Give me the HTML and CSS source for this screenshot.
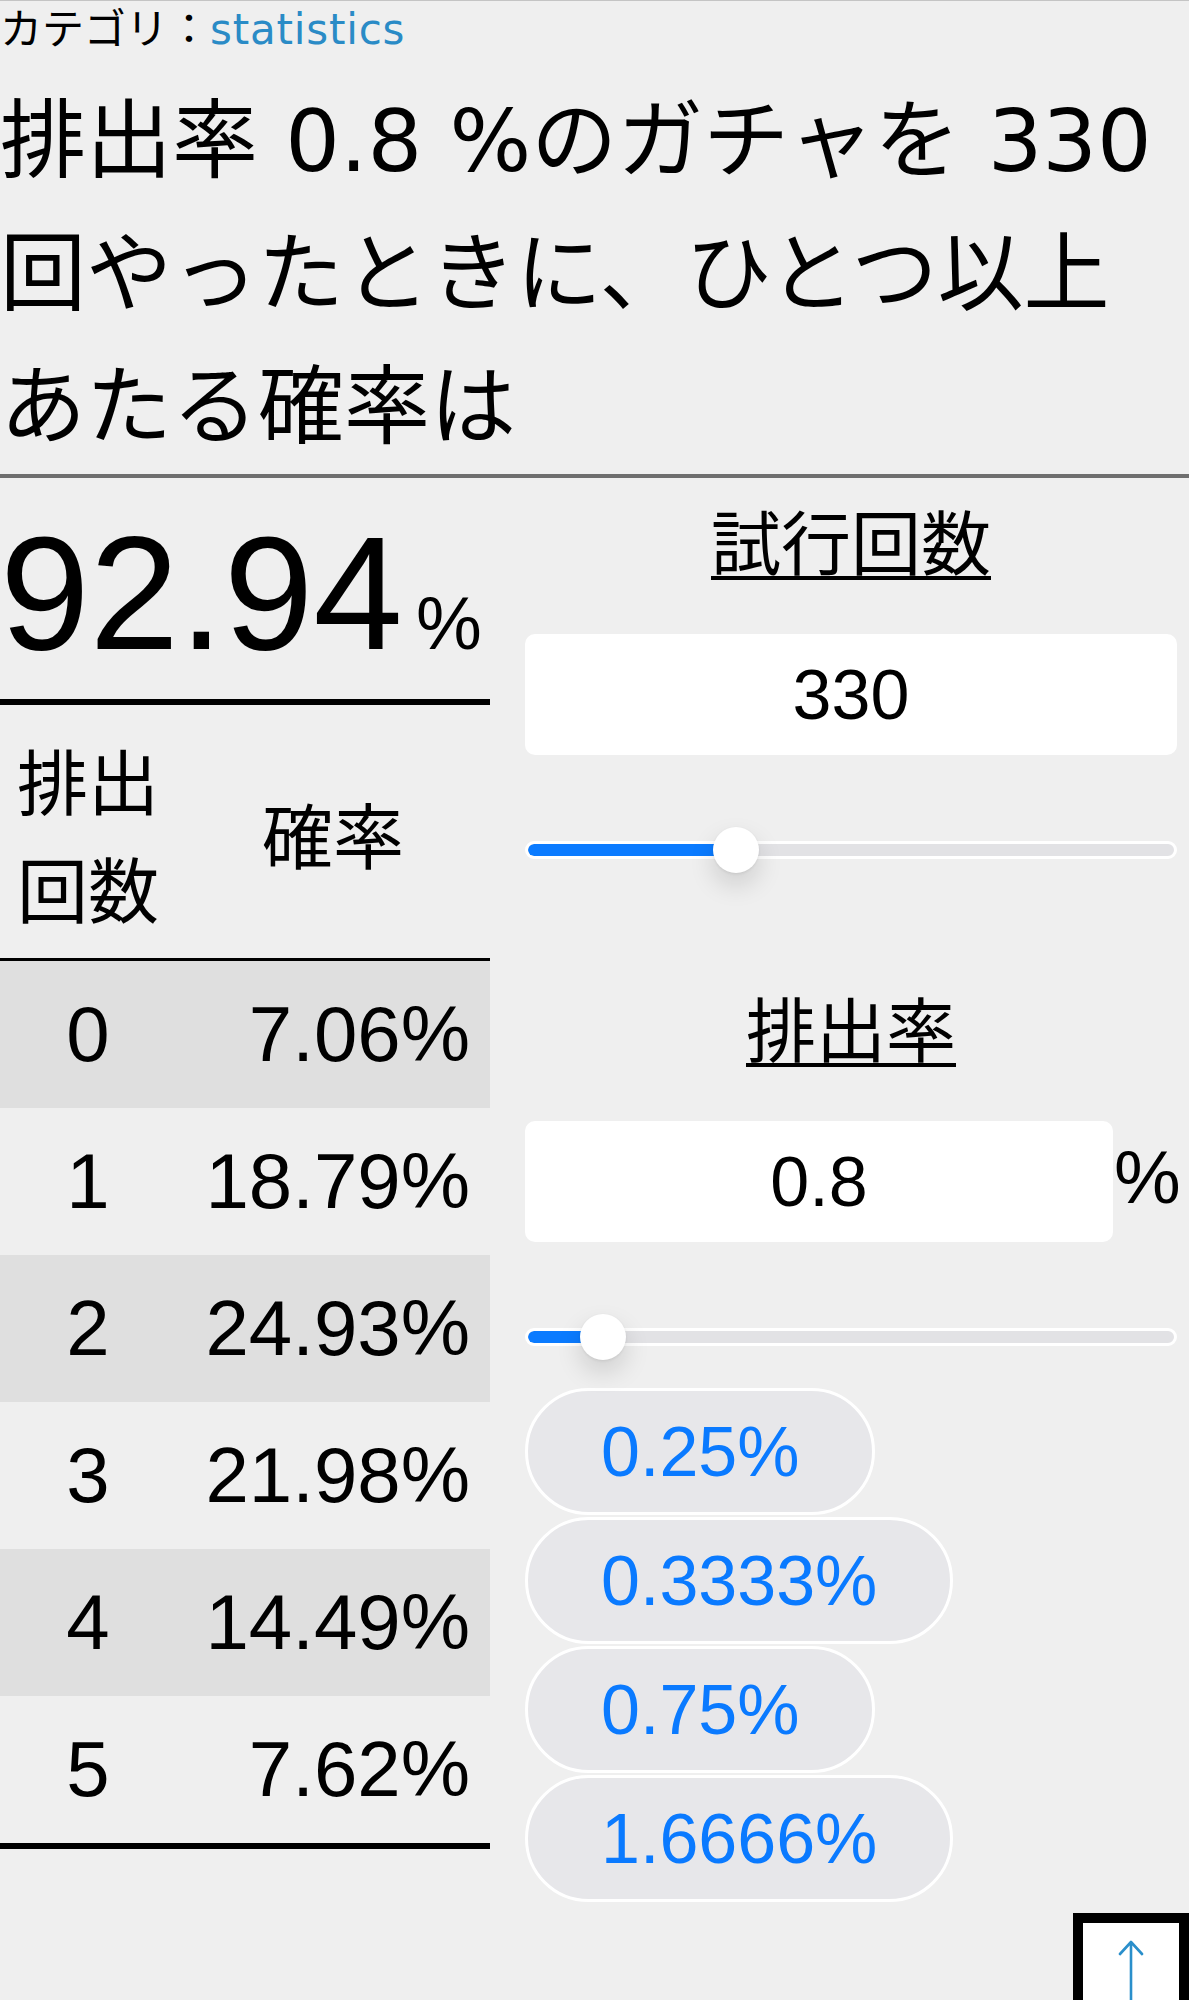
FILE: index.html
```html
<!DOCTYPE html>
<html lang="ja">
<head>
<meta charset="utf-8">
<title>ガチャ確率計算</title>
<link rel="stylesheet" href="styles.css">
</head>
<body>
  <p class="category">カテゴリ：<a class="category-link" href="#">statistics</a></p>
  <h1 class="title">排出率 0.8 %のガチャを 330<br>回やったときに、ひとつ以上<br>あたる確率は</h1>
  <div class="rule"></div>
  <main class="calc">
    <section class="result">
      <div class="total">92.94<span class="total-unit">%</span></div>
      <table class="dist">
        <thead>
          <tr><th class="col-count">排出回数</th><th class="col-prob">確率</th></tr>
        </thead>
        <tbody>
          <tr><td class="n">0</td><td class="p">7.06%</td></tr>
          <tr><td class="n">1</td><td class="p">18.79%</td></tr>
          <tr><td class="n">2</td><td class="p">24.93%</td></tr>
          <tr><td class="n">3</td><td class="p">21.98%</td></tr>
          <tr><td class="n">4</td><td class="p">14.49%</td></tr>
          <tr><td class="n">5</td><td class="p">7.62%</td></tr>
        </tbody>
      </table>
    </section>
    <section class="controls">
      <h2 class="field-label"><span>試行回数</span></h2>
      <div class="field-row">
        <input class="num-input" type="text" size="3" value="330">
      </div>
      <div class="slider" style="--pos: 32.3%">
        <div class="slider-track"><div class="slider-fill"></div></div>
        <div class="slider-thumb"></div>
      </div>
      <h2 class="field-label second"><span>排出率</span></h2>
      <div class="field-row">
        <input class="num-input" type="text" size="3" value="0.8">
        <span class="field-unit">%</span>
      </div>
      <div class="slider" style="--pos: 12%">
        <div class="slider-track"><div class="slider-fill"></div></div>
        <div class="slider-thumb"></div>
      </div>
      <div class="presets">
        <button class="preset" type="button">0.25%</button>
        <button class="preset" type="button">0.3333%</button>
        <button class="preset" type="button">0.75%</button>
        <button class="preset" type="button">1.6666%</button>
      </div>
    </section>
  </main>
  <a class="to-top" href="#">
    <svg class="to-top-icon" width="26" height="80" viewBox="0 0 26 80" aria-label="↑">
      <path d="M13 2 V80 M2 14 L13 2 L24 14" fill="none" stroke="#2a8fcb" stroke-width="2.6" stroke-linecap="round" stroke-linejoin="round"/>
    </svg>
  </a>
</body>
</html>
```
FILE: styles.css
```css
* { box-sizing: border-box; }

html, body { margin: 0; padding: 0; }

body {
  background: #efefef;
  border-top: 1px solid #c4c4c4;
  font-family: "Liberation Sans", "Noto Sans CJK JP", sans-serif;
  color: #000;
  min-height: 2000px;
  overflow-x: hidden;
}

.category {
  margin: 0;
  padding-top: 1px;
  font-family: "DejaVu Sans", "Noto Sans CJK JP", sans-serif;
  font-size: 42px;
  line-height: 56px;
}

.category-link {
  color: #2a8bc6;
  text-decoration: none;
  letter-spacing: 0.8px;
}

.title {
  margin: 17px 0 0;
  font-family: "DejaVu Sans", "Noto Sans CJK JP", sans-serif;
  font-weight: normal;
  font-size: 86px;
  line-height: 133px;
  white-space: nowrap;
}

.rule {
  height: 4px;
  background: #6e6e6e;
}

.calc {
  display: flex;
  align-items: flex-start;
  gap: 35px;
  padding-right: 12px;
}

.result {
  flex: none;
  width: 490px;
}

.total {
  height: 221px;
  padding-top: 35px;
  font-size: 161px;
  line-height: 161px;
  white-space: nowrap;
}

.total-unit {
  font-size: 74px;
  line-height: 1;
  margin-left: 13px;
}

.dist {
  width: 490px;
  table-layout: fixed;
  border-collapse: separate;
  border-spacing: 0;
  border-top: 6px solid #000;
  border-bottom: 6px solid #000;
}

.dist th {
  font-family: "Noto Sans CJK JP", sans-serif;
  font-weight: normal;
  font-size: 71px;
  line-height: 108px;
  padding: 19px 0 18px;
  border-bottom: 3px solid #000;
  text-align: center;
}

.col-count { width: 176px; }

.dist td {
  height: 147px;
  padding: 0;
  font-size: 78px;
  vertical-align: middle;
}

.dist td.n { text-align: center; }

.dist td.p {
  text-align: right;
  padding-right: 20px;
}

.dist tbody tr:nth-child(odd) { background: #dfdfdf; }

.controls {
  flex: 1;
  min-width: 0;
  display: flex;
  flex-direction: column;
}

.field-label {
  margin: 20px 0 0;
  font-family: "Noto Sans CJK JP", sans-serif;
  font-weight: normal;
  font-size: 70px;
  line-height: 84px;
  text-align: center;
}

.field-label.second { margin-top: 112px; }

.field-label span {
  text-decoration: underline;
  text-decoration-thickness: 4px;
  text-underline-offset: 6px;
}

.field-row {
  display: flex;
  align-items: center;
  margin-top: 52px;
}

.num-input {
  display: block;
  flex: 1 1 0;
  width: 100%;
  min-width: 0;
  height: 121px;
  border: 0;
  border-radius: 10px;
  background: #fff;
  color: #000;
  font-family: "Liberation Sans", sans-serif;
  font-size: 70px;
  text-align: center;
  padding: 0;
  outline: none;
}

.field-unit {
  flex: none;
  width: 64px;
  padding-left: 1px;
  font-size: 75px;
  margin-bottom: 10px;
}

.slider {
  position: relative;
  display: flex;
  align-items: center;
  height: 46px;
  margin-top: 72px;
}

.slider-track {
  flex: 1;
  height: 18px;
  border: 3px solid #fff;
  border-radius: 9px;
  background: #e2e2e5;
  overflow: hidden;
}

.slider-fill {
  width: var(--pos);
  height: 100%;
  background: #0b7bff;
  border-radius: 6px;
}

.slider-thumb {
  position: absolute;
  top: 0;
  left: calc(var(--pos) - 23px);
  width: 46px;
  height: 46px;
  border-radius: 50%;
  background: #fff;
  box-shadow: 0 12px 26px rgba(0, 0, 0, 0.14), 0 1px 3px rgba(0, 0, 0, 0.08);
}

.presets {
  display: flex;
  flex-direction: column;
  align-items: flex-start;
  gap: 2px;
  margin-top: 28px;
}

.preset {
  height: 127px;
  padding: 0 73px;
  border: 3px solid #fff;
  border-radius: 64px;
  background: #e7e7ea;
  color: #0a7aff;
  font-family: "Liberation Sans", sans-serif;
  font-size: 70px;
}

.to-top {
  position: fixed;
  right: 0;
  bottom: -29px;
  width: 116px;
  height: 116px;
  border: 10px solid #000;
  background: #fff;
  display: flex;
  justify-content: center;
  align-items: flex-start;
  padding-top: 17px;
}

.to-top-icon { display: block; }
```
